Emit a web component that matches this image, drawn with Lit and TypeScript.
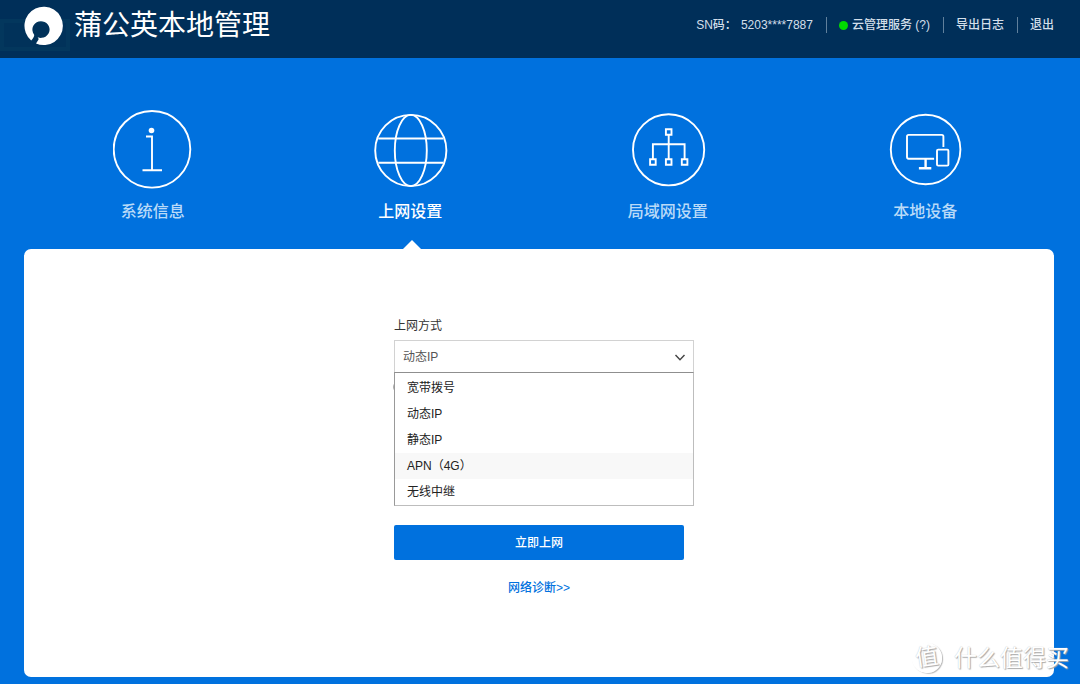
import { LitElement, html, css, svg } from "lit";
import { customElement, state } from "lit/decorators.js";
import { classMap } from "lit/directives/class-map.js";

const infoIcon = svg`
  <circle cx="39" cy="39.3" r="38.3" />
  <circle cx="38.5" cy="20.5" r="2.8" fill="#fff" stroke="none" />
  <path d="M33 26.5h6V60M29.5 60.2h19.5" />`;

const globeIcon = svg`
  <circle cx="40.8" cy="40.5" r="35.6" />
  <ellipse cx="40.8" cy="40.5" rx="16" ry="35.6" />
  <path d="M8.3 28.5h65M8.3 52.8h65" />`;

const lanIcon = svg`
  <circle cx="40.6" cy="39.8" r="35.6" />
  <path d="M37.9 19.2h5.6v5.6h-5.6zM22.1 49.2h5.6v5.6h-5.6zM37.9 49.2h5.6v5.6h-5.6zM53.8 49.2h5.6v5.6h-5.6z" />
  <path d="M40.7 25v24M24.9 49V34.3H56.6V49" />`;

const deviceIcon = svg`
  <circle cx="40.6" cy="39.5" r="34.8" />
  <path d="M58.4 37V26.5q0-1.6-1.6-1.6H23.6q-1.6 0-1.6 1.6v20.6q0 1.6 1.6 1.6h25.5" />
  <rect x="52" y="39.6" width="11.4" height="16" rx="1.2" />
  <path d="M40.6 49v9M33.9 58.2h12.4" stroke-width="2.4" />`;

const TABS = [
  { label: "系统信息", icon: infoIcon },
  { label: "上网设置", icon: globeIcon },
  { label: "局域网设置", icon: lanIcon },
  { label: "本地设备", icon: deviceIcon },
];

const MODES = ["宽带拨号", "动态IP", "静态IP", "APN（4G）", "无线中继"];

@customElement("app-root")
export class AppRoot extends LitElement {
  @state() private tab = 1;
  @state() private mode = "动态IP";
  @state() private hovered = 3;
  @state() private open = true;

  static styles = css`
    :host {
      display: flex;
      flex-direction: column;
      position: relative;
      min-height: 100vh;
      box-sizing: border-box;
      padding-bottom: 7px;
      background: #0071de;
      overflow: hidden;
      font: 12px/18px "Liberation Sans", "Noto Sans CJK SC", sans-serif;
      color: #333;
    }
    * {
      box-sizing: border-box;
    }
    a {
      color: inherit;
      text-decoration: none;
    }
    button {
      font: inherit;
      border: 0;
      padding: 0;
      cursor: pointer;
    }
    .header {
      display: flex;
      justify-content: space-between;
      align-items: center;
      height: 58px;
      padding: 0 26px 8px 24px;
      background: #002f59;
      color: #d3dfea;
    }
    .brand {
      position: relative;
      display: flex;
      align-items: center;
      gap: 10px;
      padding-top: 2px;
    }
    .logo {
      display: block;
      width: 40px;
      height: 40px;
    }
    .title {
      margin: 0;
      font-size: 28px;
      line-height: 40px;
      font-weight: 400;
      color: #fff;
    }
    .tools {
      display: flex;
      align-items: center;
      line-height: 16px;
      font-weight: 500;
    }
    .tool {
      display: flex;
      align-items: center;
      gap: 4px;
      padding: 0 13px 0 12px;
      border-left: 1px solid #60809c;
    }
    .tool:first-child {
      border-left: 0;
    }
    .tool:last-child {
      padding-right: 0;
    }
    .dot {
      width: 9px;
      height: 9px;
      border-radius: 50%;
      background: #00dc00;
    }
    .tabs {
      display: flex;
      margin: 52px 26px 0 24px;
      height: 139px;
    }
    .tab {
      flex: 1;
      position: relative;
      display: flex;
      flex-direction: column;
      align-items: center;
      justify-content: flex-start;
      gap: 10px;
      background: none;
      color: #b9daf8;
      font-size: 16px;
      line-height: 24px;
      font-weight: 500;
    }
    .tab.active {
      color: #fff;
    }
    .tab.active::after {
      content: "";
      position: absolute;
      bottom: 0;
      left: 50%;
      margin-left: -7px;
      border: 9px solid transparent;
      border-top: 0;
      border-bottom-color: #fff;
    }
    .icon {
      display: block;
      width: 80px;
      height: 80px;
      fill: none;
      stroke: #fff;
      stroke-width: 1.9;
    }
    .panel {
      flex: 1;
      display: flex;
      justify-content: center;
      margin: 0 26px 0 24px;
      padding: 68px 20px 40px;
      border-radius: 7px;
      background: #fff;
    }
    .form {
      display: flex;
      flex-direction: column;
      width: 290px;
    }
    .label {
      margin-bottom: 5px;
    }
    .field {
      position: relative;
      width: 300px;
    }
    .select {
      display: block;
      appearance: none;
      width: 100%;
      height: 33px;
      padding: 0 30px 0 8px;
      border: 1px solid #d2d2d2;
      border-radius: 0;
      outline: 0;
      background: #fff;
      color: #555;
      font: inherit;
    }
    .chevron {
      position: absolute;
      top: 13px;
      right: 8px;
      width: 12px;
      height: 9px;
      fill: none;
      stroke: #444;
      stroke-width: 1.4;
      pointer-events: none;
    }
    .list {
      position: absolute;
      z-index: 1;
      top: 32px;
      left: 0;
      right: 0;
      margin: 0;
      padding: 2px 0 0;
      list-style: none;
      background: #fff;
      border: 1px solid #bdbdbd;
      border-top-color: #8f8f8f;
      border-left-color: #999;
    }
    .option {
      padding: 4px 12px;
      color: #222;
      cursor: pointer;
    }
    .option.hovered {
      background: #f8f8f8;
    }
    .details {
      height: 152px;
      padding-top: 8px;
    }
    .mark {
      width: 12px;
      height: 12px;
      margin-left: -1px;
      border: 1px solid #aaa;
      border-radius: 50%;
    }
    .submit {
      height: 35px;
      border-radius: 2px;
      background: #0071de;
      color: #fff;
      font-weight: 500;
    }
    .diagnose {
      align-self: center;
      margin-top: 19px;
      color: #0071de;
      font-weight: 500;
    }
    .watermark {
      position: absolute;
      right: 11px;
      bottom: 9px;
      display: flex;
      align-items: center;
      gap: 12px;
      color: #fff;
      font-size: 23px;
      line-height: 34px;
      text-shadow: 1px 1px 1px #aaa, 0 0 1px #bbb;
      pointer-events: none;
    }
    .seal {
      width: 30px;
      height: 30px;
      border: 1px solid #fff;
      border-radius: 50%;
      box-shadow: 1px 1px 1px #bbb;
      line-height: 26px;
      text-align: center;
      transform: rotate(-8deg);
    }
    .ghost {
      position: absolute;
      top: 19px;
      left: 0;
      width: 70px;
      height: 32px;
      border: 4px solid rgba(20, 85, 110, 0.16);
      background: rgba(10, 70, 100, 0.14);
      pointer-events: none;
    }
  `;

  private choose(mode: string) {
    this.mode = mode;
    this.open = false;
  }

  private toggle(e: Event) {
    e.preventDefault();
    this.open = !this.open;
  }

  render() {
    return html`
      <header class="header">
        <div class="ghost"></div>
        <div class="brand">
          <svg class="logo" viewBox="0 0 40 40" aria-hidden="true">
            <path
              fill="#fff"
              d="M7.2 34.5A19.2 19.2 0 1 1 12 37.5L14.4 33.8Q15 32.6 13.6 31.2A8.6 8.3 0 1 0 10 28.4Q11 30 7.2 34.5Z"
            />
          </svg>
          <h1 class="title">蒲公英本地管理</h1>
        </div>
        <nav class="tools">
          <span class="tool"><span>SN码：</span><span>5203****7887</span></span>
          <a class="tool" href="#cloud"><span class="dot"></span>云管理服务 (?)</a>
          <a class="tool" href="#log">导出日志</a>
          <a class="tool" href="#exit">退出</a>
        </nav>
      </header>

      <nav class="tabs">
        ${TABS.map(
          (t, i) => html`
            <button
              class=${classMap({ tab: true, active: i === this.tab })}
              @click=${() => (this.tab = i)}
            >
              <svg class="icon" viewBox="0 0 80 80" aria-hidden="true">${t.icon}</svg>
              <span>${t.label}</span>
            </button>
          `
        )}
      </nav>

      <main class="panel">
        <form class="form" @submit=${(e: Event) => e.preventDefault()}>
          <label class="label" for="mode">上网方式</label>
          <div class="field">
            <select id="mode" class="select" .value=${this.mode} @mousedown=${this.toggle}>
              ${MODES.map((m) => html`<option value=${m} ?selected=${m === this.mode}>${m}</option>`)}
            </select>
            <svg class="chevron" viewBox="0 0 12 9" aria-hidden="true"><path d="M1.5 2 6 6.8 10.5 2" /></svg>
            ${this.open
              ? html`<ul class="list" role="listbox">
                  ${MODES.map(
                    (m, i) => html`<li
                      class=${classMap({ option: true, hovered: i === this.hovered })}
                      role="option"
                      aria-selected=${m === this.mode}
                      @mouseenter=${() => (this.hovered = i)}
                      @click=${() => this.choose(m)}
                    >${m}</li>`
                  )}
                </ul>`
              : null}
          </div>
          <div class="details"><div class="mark"></div></div>
          <button class="submit" type="submit">立即上网</button>
          <a class="diagnose" href="#diagnose">网络诊断&gt;&gt;</a>
        </form>
      </main>

      <div class="watermark"><span class="seal">值</span><span>什么值得买</span></div>
    `;
  }
}
